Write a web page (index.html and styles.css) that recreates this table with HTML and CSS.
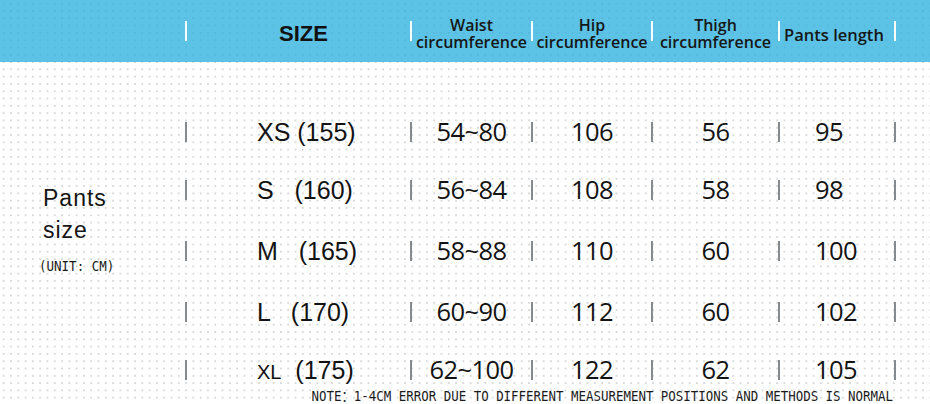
FILE: index.html
```html
<!DOCTYPE html>
<html lang="en">
<head>
<meta charset="utf-8">
<title>Pants size chart</title>
<link rel="stylesheet" href="styles.css">
</head>
<body>
<div class="page">
  <header class="head grid">
    <div class="blank"></div>
    <span class="sep"></span>
    <div class="h-size">SIZE</div>
    <span class="sep"></span>
    <div class="h-col">Waist<br>circumference</div>
    <span class="sep"></span>
    <div class="h-col">Hip<br>circumference</div>
    <span class="sep"></span>
    <div class="h-col">Thigh<br>circumference</div>
    <span class="sep"></span>
    <div class="h-col h-len">Pants length</div>
    <span class="sep"></span>
  </header>

  <main class="table grid">
    <div class="label">
      <span class="lbl-line">Pants</span>
      <span class="lbl-line">size</span>
      <span class="unit">(UNIT: CM)</span>
    </div>

    <span class="sep"></span><div class="size">XS (155)</div><span class="sep"></span><div class="val">54~80</div><span class="sep"></span><div class="val">106</div><span class="sep"></span><div class="val">56</div><span class="sep"></span><div class="val len">95</div><span class="sep"></span>

    <span class="sep"></span><div class="size">S   (160)</div><span class="sep"></span><div class="val">56~84</div><span class="sep"></span><div class="val">108</div><span class="sep"></span><div class="val">58</div><span class="sep"></span><div class="val len">98</div><span class="sep"></span>

    <span class="sep"></span><div class="size">M   (165)</div><span class="sep"></span><div class="val">58~88</div><span class="sep"></span><div class="val">110</div><span class="sep"></span><div class="val">60</div><span class="sep"></span><div class="val len">100</div><span class="sep"></span>

    <span class="sep"></span><div class="size">L   (170)</div><span class="sep"></span><div class="val">60~90</div><span class="sep"></span><div class="val">112</div><span class="sep"></span><div class="val">60</div><span class="sep"></span><div class="val len">102</div><span class="sep"></span>

    <span class="sep"></span><div class="size"><span class="sm">XL</span>  (175)</div><span class="sep"></span><div class="val">62~100</div><span class="sep"></span><div class="val">122</div><span class="sep"></span><div class="val">62</div><span class="sep"></span><div class="val len">105</div><span class="sep"></span>
  </main>

  <p class="note">NOTE：1-4CM ERROR DUE TO DIFFERENT MEASUREMENT POSITIONS AND METHODS IS NORMAL</p>
</div>
</body>
</html>
```

FILE: styles.css
```css
html, body {
  margin: 0;
  padding: 0;
}

body {
  width: 930px;
  height: 404px;
  overflow: hidden;
  background-color: #ffffff;
  background-image: radial-gradient(circle, #d8d8d8 0.9px, transparent 1.4px);
  background-size: 7.3px 7.3px;
  font-family: "Liberation Sans", Arial, sans-serif;
  color: #141414;
}

.page {
  width: 930px;
  height: 404px;
}

.grid {
  display: grid;
  grid-template-columns: 185px 2px 223px 2px 119px 2px 118px 2px 125px 2px 114px 2px;
}

/* Header */
.head {
  height: 62px;
  box-sizing: border-box;
  padding-top: 6px;
  align-items: center;
  background-color: #5cc3e7;
  background-image: radial-gradient(circle, rgba(40, 110, 140, 0.13) 0.9px, transparent 1.4px);
  background-size: 7.3px 7.3px;
}

.head .sep {
  align-self: start;
  margin-top: 15px;
  height: 20px;
  background: rgba(255, 255, 255, 0.95);
}

.h-size {
  font-family: "Liberation Sans", Arial, sans-serif;
  font-weight: 700;
  font-size: 22px;
  line-height: 1;
  text-align: center;
  padding-left: 10px;
  color: #111;
}

.h-col {
  font-family: "Open Sans", "Noto Sans", sans-serif;
  font-weight: 600;
  font-size: 16px;
  line-height: 17px;
  text-align: center;
  color: #161616;
  white-space: nowrap;
}

.h-len {
  padding-right: 6px;
  font-size: 16.5px;
}

/* Body table */
.table {
  margin-top: 42px;
  grid-template-rows: 56px 60px 62px 60px 56px;
  align-items: center;
}

.table .sep {
  height: 20px;
  background: #858a8f;
}

.label {
  grid-column: 1;
  grid-row: 1 / 6;
  align-self: start;
  margin-top: 78px;
  padding-left: 43px;
  display: flex;
  flex-direction: column;
  align-items: flex-start;
}

.lbl-line {
  font-family: "Liberation Sans", Arial, sans-serif;
  font-size: 23px;
  letter-spacing: 1px;
  line-height: 32px;
  color: #151515;
}

.unit {
  display: inline-block;
  margin-top: 13px;
  margin-left: -4px;
  font-family: "DejaVu Sans Mono", "Liberation Mono", monospace;
  font-size: 12.5px;
  line-height: 14px;
  transform: scaleY(1.15);
  color: #1a1a1a;
}

.size {
  padding-left: 70px;
  font-family: "Liberation Sans", Arial, sans-serif;
  font-size: 25px;
  line-height: 1;
  white-space: pre;
  color: #131313;
}

.size .sm {
  font-size: 20px;
}

.val {
  font-family: "Open Sans", "Noto Sans", sans-serif;
  font-size: 25.5px;
  letter-spacing: -0.6px;
  line-height: 1;
  text-align: center;
  color: #131313;
}

.val.len {
  text-align: left;
  padding-left: 35px;
}

.note {
  margin: -8px 0 0;
  padding-right: 37px;
  text-align: right;
  font-family: "DejaVu Sans Mono", "Noto Sans CJK SC", monospace;
  font-size: 12.45px;
  line-height: 14px;
  transform: scaleY(1.12);
  color: #1a1a1a;
  white-space: nowrap;
}
```
